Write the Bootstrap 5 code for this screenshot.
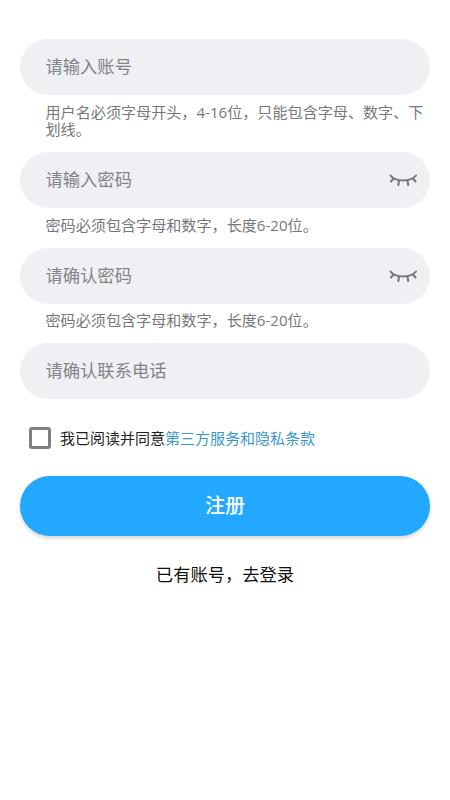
<!DOCTYPE html>
<html lang="zh-CN">
<head>
<meta charset="utf-8">
<meta name="viewport" content="width=device-width, initial-scale=1">
<title>注册</title>
<link rel="stylesheet" href="https://cdn.jsdelivr.net/npm/bootstrap@5.3.0/dist/css/bootstrap.min.css">
<style>
html,body{height:100%;}
body{background:#fff;font-family:"Open Sans","Noto Sans CJK SC","Noto Sans",sans-serif;overflow:hidden;}
.reg-page{padding:39px 20px 0 20px;}
.field-box{height:56px;border-radius:28px;background:#eff0f4;padding:0 13px 0 25.5px;}
.field-box input{border:0;background:transparent;padding:0 0 1px 0;height:100%;font-size:17.3px;box-shadow:none;color:#333;}
.field-box input::placeholder{color:#838386;opacity:1;}
.field-box input:focus{background:transparent;box-shadow:none;}
.hint-text{margin:9px 0 0 0;padding:0 4px 0 25.5px;font-size:15.1px;line-height:17px;color:#77777a;height:48px;}
.hint-text.hint-short{margin-top:6.5px;height:33px;line-height:21px;}
.eye-icon{width:28px;height:16px;flex:none;}
.agree-row{margin:28px 0 0 9px;height:22px;font-size:15px;line-height:22px;color:#222;}
.agree-row .form-check-input{width:22px;height:22px;margin:0 9px 0 0;border:3px solid #808080;border-radius:3px;background-color:#fff;flex:none;}
.agree-row a{color:#3d97c9;text-decoration:none;}
.submit-btn{display:block;width:100%;height:60px;margin-top:27px;border:0;border-radius:30px;background:#23a8ff;color:#fff;font-size:20px;font-weight:500;box-shadow:0 2px 4px rgba(0,0,0,.18);padding:0;}
.submit-btn:hover{background:#23a8ff;color:#fff;}
.login-jump{margin-top:26px;font-size:17.3px;line-height:26px;color:#111;text-align:center;}
.login-jump a{color:inherit;text-decoration:none;}
</style>
</head>
<body>
<main class="reg-page">
  <form>
    <div class="field-box d-flex align-items-center">
      <input class="form-control" type="text" placeholder="请输入账号">
    </div>
    <p class="hint-text">用户名必须字母开头，4-16位，只能包含字母、数字、下划线。</p>
    <div class="field-box d-flex align-items-center">
      <input class="form-control" type="password" placeholder="请输入密码">
      <svg class="eye-icon" viewBox="0 0 28 16" fill="none" stroke="#77777b" stroke-width="2" stroke-linecap="round" aria-hidden="true"><path d="M1.5 3.5C6 10 22 10 27 3.5"/><path d="M4.5 6.5 2 9.5M10 8.5 9.3 13M18.5 8.5 19.2 13M24 6.5 26.5 9.5"/></svg>
    </div>
    <p class="hint-text hint-short">密码必须包含字母和数字，长度6-20位。</p>
    <div class="field-box d-flex align-items-center">
      <input class="form-control" type="password" placeholder="请确认密码">
      <svg class="eye-icon" viewBox="0 0 28 16" fill="none" stroke="#77777b" stroke-width="2" stroke-linecap="round" aria-hidden="true"><path d="M1.5 3.5C6 10 22 10 27 3.5"/><path d="M4.5 6.5 2 9.5M10 8.5 9.3 13M18.5 8.5 19.2 13M24 6.5 26.5 9.5"/></svg>
    </div>
    <p class="hint-text hint-short">密码必须包含字母和数字，长度6-20位。</p>
    <div class="field-box d-flex align-items-center">
      <input class="form-control" type="tel" placeholder="请确认联系电话">
    </div>
    <div class="agree-row d-flex align-items-center">
      <input class="form-check-input" type="checkbox" id="agree">
      <label for="agree">我已阅读并同意<a href="#">第三方服务和隐私条款</a></label>
    </div>
    <button class="btn submit-btn" type="button">注册</button>
    <div class="login-jump"><a href="#">已有账号，去登录</a></div>
  </form>
</main>
<script src="https://cdn.jsdelivr.net/npm/bootstrap@5.3.0/dist/js/bootstrap.bundle.min.js"></script>
</body>
</html>
